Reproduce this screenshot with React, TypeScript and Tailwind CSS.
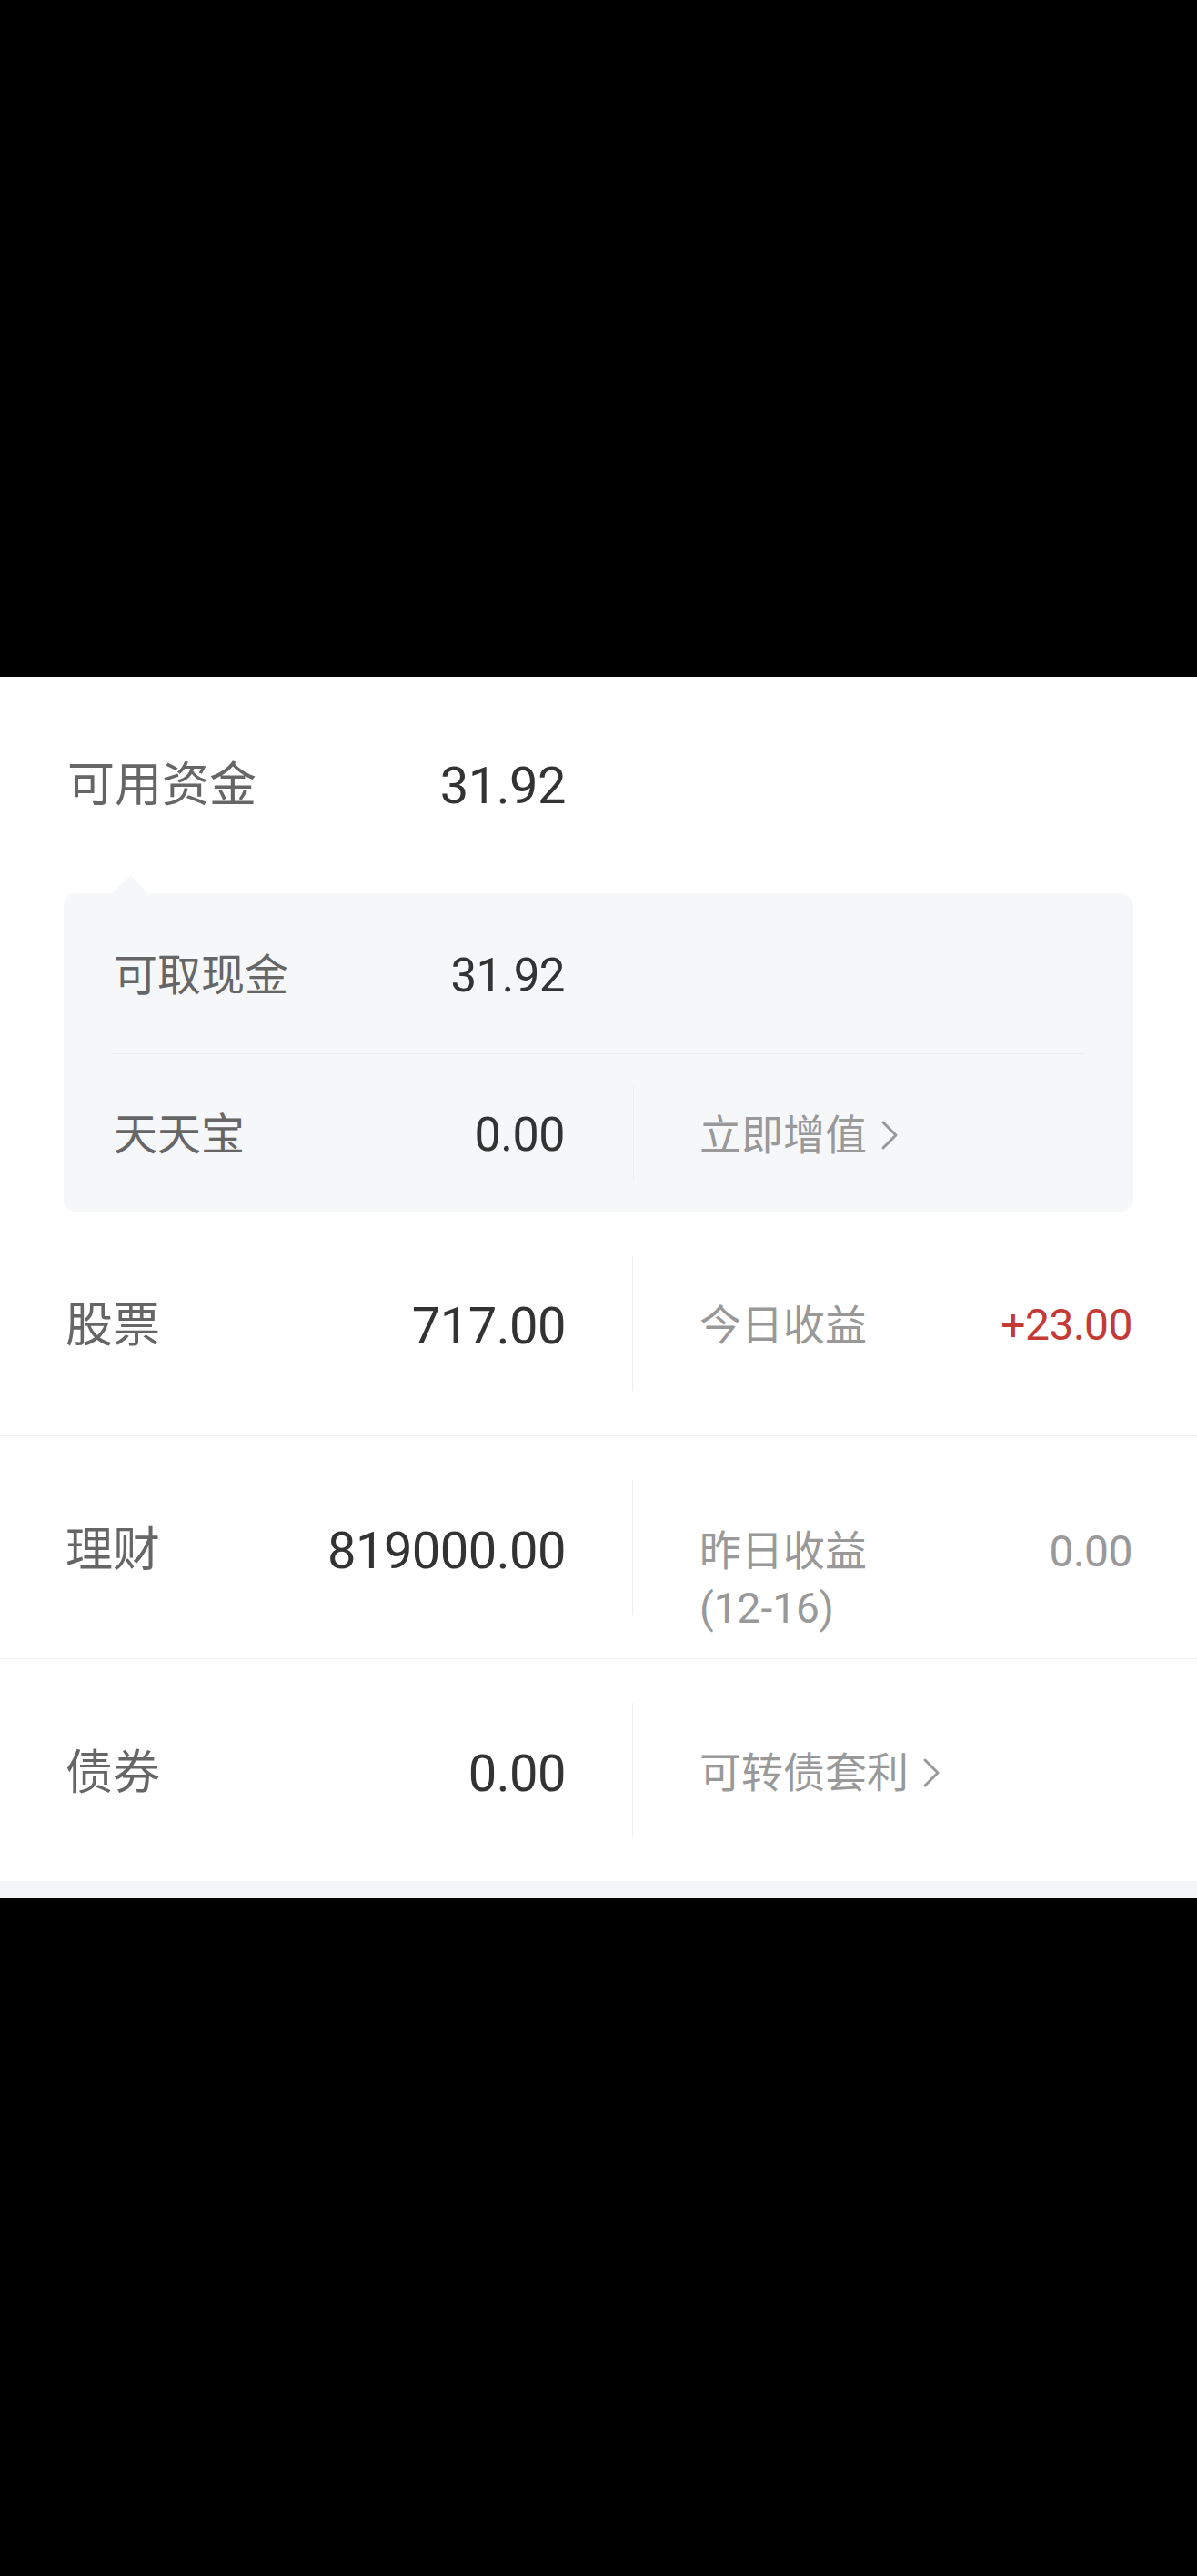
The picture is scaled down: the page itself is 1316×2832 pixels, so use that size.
import { type ReactNode } from 'react';

const FONT = { fontFamily: 'Roboto, "Noto Sans CJK SC", sans-serif' };

function Chevron() {
  return (
    <svg width="22" height="34" viewBox="0 0 22 34" fill="none" className="ml-[14px] shrink-0">
      <polyline points="4,3 18,17 4,31" stroke="#999999" strokeWidth="3" strokeLinecap="round" strokeLinejoin="round" />
    </svg>
  );
}

function VLine({ h }: { h: string }) {
  return <div className={`w-px self-center bg-[#eeeeee] ${h}`} />;
}

type RowProps = {
  label: string;
  value: string;
  right: ReactNode;
  height: string;
  border?: boolean;
};

function AssetRow({ label, value, right, height, border }: RowProps) {
  return (
    <div className={`flex ${height} ${border ? 'border-b border-[#f2f2f2]' : ''}`}>
      <div className="flex w-[695px] justify-between pl-[72px] pr-[73px] pt-[96px]">
        <span className="text-[52px] leading-[60px] text-[#666666]">{label}</span>
        <span className="text-[56px] leading-[60px] tracking-[-0.5px] text-[#333333]">{value}</span>
      </div>
      <VLine h="h-[148px]" />
      <div className="flex flex-1 items-start justify-between pl-[73px] pr-[71px] pt-[95px]">
        {right}
      </div>
    </div>
  );
}

export default function App() {
  return (
    <div className="flex min-h-[2832px] w-[1316px] flex-col bg-black" style={FONT}>
      <div className="h-[744px] shrink-0" />

      <div className="bg-white">
        {/* 可用资金 */}
        <div className="flex w-[695px] justify-between pl-[74px] pr-[73px] pt-[90px]">
          <span className="text-[52px] leading-[60px] text-[#666666]">可用资金</span>
          <span className="text-[56px] leading-[60px] tracking-[-0.5px] text-[#333333]">31.92</span>
        </div>

        <div className="mt-[68px] px-[70px]">
          <div className="ml-[53px] h-0 w-0 border-x-[20px] border-b-[20px] border-x-transparent border-b-[#f6f7f9]" />
          <div className="rounded-[14px] bg-[#f6f7f9] px-[53px]">
            <div className="flex h-[176px] w-[573px] justify-between pl-[2px] pr-[75px] pt-[61px]">
              <span className="text-[48px] leading-[60px] text-[#666666]">可取现金</span>
              <span className="text-[51px] leading-[60px] tracking-[-0.5px] text-[#333333]">31.92</span>
            </div>
            <div className="h-px bg-[#ebedf0]" />
            <div className="flex h-[173px]">
              <div className="flex w-[573px] justify-between pl-[2px] pr-[75px] pt-[59px]">
                <span className="text-[48px] leading-[60px] text-[#666666]">天天宝</span>
                <span className="text-[52px] leading-[60px] tracking-[-0.5px] text-[#333333]">0.00</span>
              </div>
              <VLine h="h-[105px]" />
              <div className="flex items-start pl-[72px] pt-[59px]">
                <span className="text-[46px] leading-[60px] text-[#999999]">立即增值</span>
                <div className="flex h-[60px] items-center">
                  <Chevron />
                </div>
              </div>
            </div>
          </div>
        </div>

        <AssetRow
          label="股票"
          value="717.00"
          height="h-[247px]"
          border
          right={
            <>
              <span className="text-[46px] leading-[60px] text-[#999999]">今日收益</span>
              <span className="text-[48px] leading-[60px] tracking-[-0.5px] text-[#c43a35]">+23.00</span>
            </>
          }
        />
        <AssetRow
          label="理财"
          value="819000.00"
          height="h-[245px]"
          border
          right={
            <>
              <span className="text-[46px] leading-[63px] text-[#999999]">
                昨日收益
                <br />
                (12-16)
              </span>
              <span className="text-[48px] leading-[63px] tracking-[-0.5px] text-[#999999]">0.00</span>
            </>
          }
        />
        <AssetRow
          label="债券"
          value="0.00"
          height="h-[244px]"
          right={
            <div className="flex items-start">
              <span className="text-[46px] leading-[60px] text-[#999999]">可转债套利</span>
              <div className="flex h-[60px] items-center">
                <Chevron />
              </div>
            </div>
          }
        />
        <div className="h-[19px] bg-[#f5f6f8]" />
      </div>

      <div className="flex-1" />
    </div>
  );
}
